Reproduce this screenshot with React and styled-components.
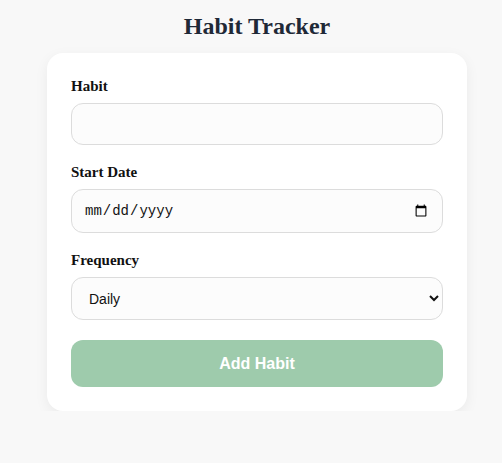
import styled, { createGlobalStyle } from 'styled-components'

const GlobalStyle = createGlobalStyle`
    body {
        margin: 0;
        background: #f8f8f8;
        font-family: "Liberation Serif", "Times New Roman", serif;
    }
`

const Page = styled.div`
    display: flex;
    flex-direction: column;
    align-items: center;
    padding: 13px 0 0 12px;
`

const Title = styled.h1`
    margin: 0 0 13px;
    font-size: 24px;
    line-height: 27px;
    font-weight: bold;
    color: #1f2937;
`

const Card = styled.form`
    box-sizing: border-box;
    width: 420px;
    background: #fff;
    border-radius: 16px;
    padding: 24px;
    box-shadow: 0 4px 14px rgba(0, 0, 0, 0.06);
    display: flex;
    flex-direction: column;
`

const Field = styled.div`
    display: flex;
    flex-direction: column;
    margin-bottom: ${props => props.last ? '20px' : '18px'};
`

const Label = styled.label`
    font-size: 15px;
    line-height: 18px;
    font-weight: bold;
    color: #111;
    margin-bottom: 8px;
`

const Input = styled.input`
    box-sizing: border-box;
    width: 100%;
    height: ${props => props.h || 42}px;
    padding: 0 12px;
    border: 1px solid #dcdcdc;
    border-radius: 12px;
    background: #fcfcfc;
    font-family: ${props => props.mono ? '"Liberation Mono", monospace' : '"Liberation Sans", Arial, sans-serif'};
    font-size: 14px;
    color: #111;
    outline: none;
`

const Select = styled.select`
    box-sizing: border-box;
    width: 100%;
    height: 43px;
    padding: 0 8px 0 13px;
    border: 1px solid #dcdcdc;
    border-radius: 12px;
    background: #fcfcfc;
    font-family: "Liberation Sans", Arial, sans-serif;
    font-size: 14px;
    color: #111;
    outline: none;
`

const Button = styled.button`
    height: 47px;
    border: 0;
    border-radius: 12px;
    background: #9ecbac;
    color: #fff;
    font-family: "Liberation Sans", Arial, sans-serif;
    font-size: 16px;
    font-weight: bold;
    cursor: not-allowed;
`

const App = () => {
    return (
        <Page>
            <GlobalStyle />
            <Title>Habit Tracker</Title>
            <Card onSubmit={e => e.preventDefault()}>
                <Field>
                    <Label htmlFor="habit">Habit</Label>
                    <Input id="habit" type="text" />
                </Field>
                <Field>
                    <Label htmlFor="start">Start Date</Label>
                    <Input id="start" type="date" h={44} mono />
                </Field>
                <Field last>
                    <Label htmlFor="freq">Frequency</Label>
                    <Select id="freq" defaultValue="daily">
                        <option value="daily">Daily</option>
                        <option value="weekly">Weekly</option>
                        <option value="monthly">Monthly</option>
                    </Select>
                </Field>
                <Button type="submit" disabled>Add Habit</Button>
            </Card>
        </Page>
    )
}

export default App
